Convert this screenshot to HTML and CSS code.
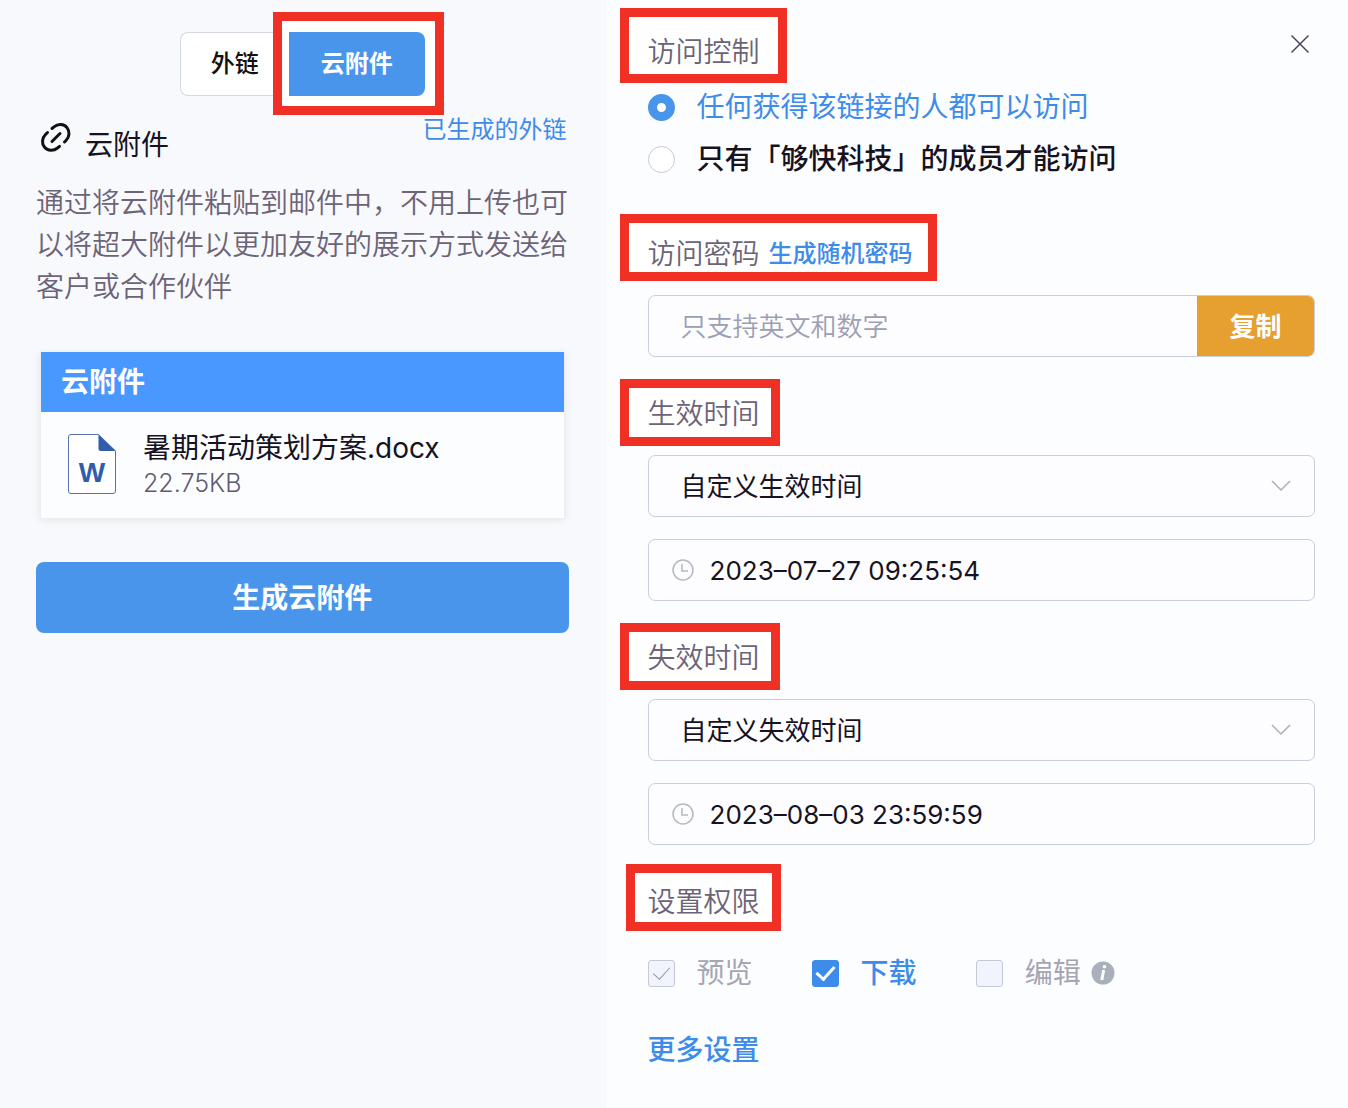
FILE: index.html
```html
<!DOCTYPE html>
<html lang="zh-CN">

<head>
  <meta charset="UTF-8" />
  <title>云附件</title>
  <link rel="stylesheet" href="styles.css">
</head>

<body>
  <main class="page">
    <section class="attach-panel">
      <div class="tabs">
        <button class="tab">外链</button>
        <div class="tab-marked">
          <button class="tab tab-active">云附件</button>
        </div>
      </div>

      <div class="attach-header">
        <svg class="link-icon" width="32" height="42" viewBox="0 0 32 42" fill="none" stroke="#111" stroke-width="3" stroke-linecap="round">
          <path d="M12 6.500 L14 4.800 C18 1.600 24 1.800 27 5.600 C30 9.400 29.600 15 26 18.500 L24.500 20" />
          <path d="M7.500 10.500 L5.500 12.500 C2 16 1.400 21.500 4.600 25.300 C7.800 29 13.500 29.200 17.500 26 L19.500 24.300" />
          <path d="M12 19.500 L20 11.500" />
        </svg>
        <h1 class="attach-title">云附件</h1>
        <a class="created-link" href="#">已生成的外链</a>
      </div>

      <p class="attach-text">通过将云附件粘贴到邮件中，不用上传也可以将超大附件以更加友好的展示方式发送给客户或合作伙伴</p>

      <div class="file-card">
        <div class="file-card-title">云附件</div>
        <div class="file-card-body">
          <svg class="file-icon" width="50" height="62" viewBox="0 0 50 62">
            <path d="M4 1.500 H31.500 L48.500 18 V58 Q48.500 60.500 46 60.500 H4 Q1.500 60.500 1.500 58 V4 Q1.500 1.500 4 1.500 Z" fill="#fff" stroke="#5670b0" />
            <path d="M31.500 1.500 L48.500 18 H34 Q31.500 18 31.500 15.500 Z" fill="#2f5cab" />
            <text class="file-letter" x="25" y="49" text-anchor="middle">W</text>
          </svg>
          <div class="file-info">
            <div class="file-name">暑期活动策划方案.docx</div>
            <div class="file-size">22.75KB</div>
          </div>
        </div>
      </div>

      <button class="create-btn">生成云附件</button>
    </section>

    <form class="settings-panel">
      <div class="settings-top">
        <h2 class="section-title title-access">访问控制</h2>
        <button class="close-btn" type="button" aria-label="关闭">
          <svg width="20" height="20" viewBox="0 0 20 20" fill="none" stroke="#4a4458" stroke-width="1.500">
            <path d="M1.500 1.500 L18.500 18.500 M18.500 1.500 L1.500 18.500" />
          </svg>
        </button>
      </div>
      <div class="radio-group">
        <label class="option option-on">
          <input class="radio" type="radio" name="access" checked />
          任何获得该链接的人都可以访问
        </label>
        <label class="option option-dark">
          <input class="radio" type="radio" name="access" />
          只有「够快科技」的成员才能访问
        </label>
      </div>

      <div class="section-title title-password">
        <label for="password">访问密码</label>
        <a class="random-link" href="#">生成随机密码</a>
      </div>
      <div class="field password-field">
        <input class="password-input" id="password" type="text" placeholder="只支持英文和数字" />
        <button class="copy-btn" type="button">复制</button>
      </div>

      <label class="section-title" for="start-type">生效时间</label>
      <div class="field">
        <select class="select" id="start-type">
          <option>自定义生效时间</option>
        </select>
        <svg class="arrow" width="20" height="12" viewBox="0 0 20 12" fill="none" stroke="#a9aebb" stroke-width="1.500">
          <path d="M1 1 L10 10 L19 1" />
        </svg>
      </div>
      <div class="field">
        <svg class="clock" width="22" height="22" viewBox="0 0 22 22" fill="none" stroke="#b4b8c4" stroke-width="1.500">
          <circle cx="11" cy="11" r="10" />
          <path d="M10 5 V12 H16" />
        </svg>
        <input class="date-input" type="text" aria-label="生效时间" value="2023–07–27 09:25:54" />
      </div>

      <label class="section-title" for="end-type">失效时间</label>
      <div class="field">
        <select class="select" id="end-type">
          <option>自定义失效时间</option>
        </select>
        <svg class="arrow" width="20" height="12" viewBox="0 0 20 12" fill="none" stroke="#a9aebb" stroke-width="1.500">
          <path d="M1 1 L10 10 L19 1" />
        </svg>
      </div>
      <div class="field">
        <svg class="clock" width="22" height="22" viewBox="0 0 22 22" fill="none" stroke="#b4b8c4" stroke-width="1.500">
          <circle cx="11" cy="11" r="10" />
          <path d="M10 5 V12 H16" />
        </svg>
        <input class="date-input" type="text" aria-label="失效时间" value="2023–08–03 23:59:59" />
      </div>

      <h2 class="section-title title-rights">设置权限</h2>
      <div class="check-group">
        <label class="option option-off">
          <input class="check" type="checkbox" checked disabled />
          预览
        </label>
        <label class="option option-on">
          <input class="check" type="checkbox" checked />
          下载
        </label>
        <div class="edit-right">
          <label class="option option-off">
            <input class="check" type="checkbox" disabled />
            编辑
          </label>
          <svg width="24" height="24" viewBox="0 0 24 24">
            <circle cx="12" cy="12" r="11.500" fill="#a9afbb" />
            <path d="M12.700 9 L10.800 19" stroke="#fff" stroke-width="3" />
            <circle cx="13.500" cy="5.800" r="1.800" fill="#fff" />
          </svg>
        </div>
      </div>

      <a class="more-link" href="#">更多设置</a>
    </form>
  </main>
</body>

</html>
```

FILE: styles.css
```css
* {
  box-sizing: border-box;
}

body {
  margin: 0;
  font-family: Inter, "Noto Sans CJK SC", sans-serif;
  font-size: 28px;
  color: #17121f;
}

h1,
h2,
p {
  margin: 0;
  font-size: 28px;
  font-weight: 400;
}

a {
  color: #3d8bea;
  text-decoration: none;
}

button,
input,
select {
  margin: 0;
  font-family: inherit;
}

.page {
  min-height: 100vh;
  display: grid;
  grid-template-columns: 45fr 55fr;
  background-color: #fcfdff;
}

/* left side */

.attach-panel {
  padding: 32px 38px 32px 36px;
  background-color: #f8f9fd;
}

.tabs {
  display: flex;
  justify-content: center;
}

.tab {
  height: 64px;
  padding: 0 30px 5px;
  border: 1px solid #d3d8e2;
  border-right: none;
  border-radius: 8px 0 0 8px;
  background-color: #fff;
  font-size: 24px;
  font-weight: 500;
  color: #111;
}

.tab-active {
  position: relative;
  padding: 0 32px 5px;
  border: none;
  border-radius: 0 8px 8px 0;
  background-color: #4a95ec;
  font-weight: 700;
  color: #fff;
}

.tab-marked {
  position: relative;
  z-index: 1;
}

.tab-marked::before {
  content: "";
  position: absolute;
  inset: -20px -19px -19px -16px;
  border: 9px solid #f03024;
  background-color: #fff;
}

.attach-header {
  display: flex;
  margin-top: 15px;
  align-items: center;
  height: 64px;
}

.link-icon {
  margin: 0 13px 0 4px;
}

.attach-title {
  flex: 1;
}

.created-link {
  align-self: flex-start;
  padding-right: 2px;
  font-size: 24px;
  line-height: 38px;
}

.attach-text {
  margin-top: 7px;
  line-height: 42px;
  font-weight: 350;
  color: #6c6376;
}

.file-card {
  margin: 44px 4px 0;
  border: 1px solid #eceef2;
  border-top: none;
  background-color: #fcfdff;
  box-shadow: 0 1px 8px rgba(0, 0, 0, 0.08);
}

.file-card-title {
  padding: 0 20px;
  background-color: #4898ff;
  line-height: 60px;
  font-weight: 700;
  color: #fff;
}

.file-card-body {
  display: flex;
  gap: 26px;
  padding: 16px 26px 20px;
}

.file-icon {
  margin-top: 5px;
}

.file-letter {
  font-family: "Liberation Sans", sans-serif;
  font-size: 28px;
  font-weight: 700;
  fill: #2f5cab;
}

.file-name {
  line-height: 40px;
}

.file-size {
  font-size: 25px;
  font-weight: 300;
  line-height: 30px;
  color: #625a6c;
}

.create-btn {
  width: 100%;
  height: 71px;
  margin-top: 43px;
  padding: 0 0 4px;
  border: none;
  border-radius: 8px;
  background-color: #4a95ec;
  font-size: 28px;
  font-weight: 700;
  color: #fff;
}

/* right side */

.settings-panel {
  padding: 32px 33px 32px 41px;
  isolation: isolate;
}

.settings-top {
  display: flex;
  justify-content: space-between;
}

.section-title {
  position: relative;
  display: block;
  width: fit-content;
  margin: 37px 0 21px;
  line-height: 40px;
  font-weight: 350;
  color: #6c6376;
}

/* red frame around the titles */
.section-title::before {
  content: "";
  position: absolute;
  z-index: -1;
  inset: -15px -20px -12px -28px;
  border: 9px solid #f03024;
  background-color: #fff;
}

.title-access {
  margin: 0 0 9px;
}

.title-access::before {
  inset: -24px -27px -11px -28px;
}

.title-password {
  display: flex;
  gap: 9px;
  margin-top: 49px;
}

.title-password::before {
  inset: -20px -24px -7px -28px;
}

.title-rights::before {
  inset: -18px -21px -9px -22px;
}

.random-link {
  font-size: 24px;
  font-weight: 500;
}

.close-btn {
  display: flex;
  align-items: center;
  justify-content: center;
  width: 30px;
  height: 24px;
  padding: 0;
  border: none;
  background: none;
}

.option {
  display: flex;
  align-items: center;
  gap: 22px;
  line-height: 40px;
}

.radio-group .option {
  line-height: 52px;
}

.option-on {
  font-weight: 500;
  color: #3d8bea;
}

.radio-group .option-on {
  font-weight: 400;
}

.option-dark {
  font-weight: 500;
}

.option-off {
  color: #a5a5b4;
}

.radio,
.check {
  appearance: none;
  display: flex;
  align-items: center;
  justify-content: center;
  width: 27px;
  height: 27px;
  border: 1px solid #c5cad6;
}

.radio {
  border-radius: 50%;
  background-color: #fff;
}

.radio:checked {
  border: 9px solid #4a95ec;
}

.check {
  border-radius: 3px;
  background-color: #f1f4fd;
}

.check:checked::before {
  content: "";
  width: 8px;
  height: 15px;
  margin-bottom: 5px;
  border: solid #9397a3;
  border-width: 0 1px 1px 0;
  transform: rotate(42deg);
}

.check:checked:enabled {
  border-color: #3d8bea;
  background-color: #3d8bea;
}

.check:checked:enabled::before {
  border-color: #fff;
  border-width: 0 3px 3px 0;
}

.field {
  display: flex;
  align-items: center;
  height: 62px;
  border: 1px solid #c9cfdb;
  border-radius: 7px;
  background-color: #fdfdff;
}

.field + .field {
  margin-top: 22px;
}

.password-input,
.select,
.date-input {
  flex: 1;
  min-width: 0;
  height: 100%;
  padding: 0 32px;
  border: none;
  outline: none;
  background: none;
  font-size: 26px;
  color: #17121f;
}

.password-input::placeholder {
  font-weight: 350;
  color: #9c9fb4;
}

.password-field {
  overflow: hidden;
}

.copy-btn {
  width: 117px;
  height: 100%;
  padding: 0 0 4px;
  border: none;
  background-color: #e6a030;
  font-size: 26px;
  font-weight: 700;
  color: #fff;
}

.select {
  appearance: none;
}

.arrow {
  margin-right: 23px;
}

.clock {
  margin-left: 23px;
}

.date-input {
  padding: 0 16px;
}

.check-group {
  display: flex;
  gap: 59px;
  margin-top: 31px;
}

.edit-right {
  display: flex;
  align-items: center;
  gap: 10px;
}

.more-link {
  display: block;
  width: fit-content;
  margin-top: 37px;
  line-height: 40px;
  font-weight: 500;
}
```
